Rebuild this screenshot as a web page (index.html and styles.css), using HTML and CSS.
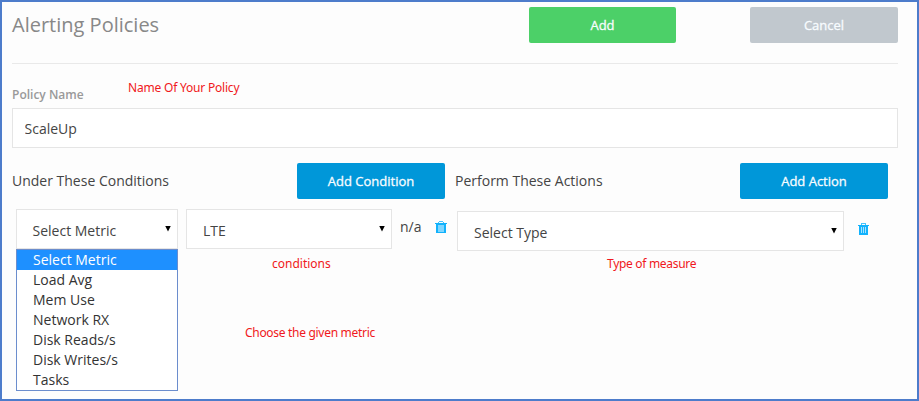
FILE: index.html
```html
<!DOCTYPE html>
<html lang="en">
<head>
<meta charset="utf-8">
<title>Alerting Policies</title>
<link rel="stylesheet" href="styles.css">
</head>
<body>
<main class="frame">
  <header class="header">
    <h1 class="title">Alerting Policies</h1>
    <button class="btn btn-add">Add</button>
    <button class="btn btn-cancel">Cancel</button>
  </header>
  <label class="label" for="name">Policy Name</label>
  <input class="name" id="name" type="text" value="ScaleUp">
  <div class="columns">
    <section class="conditions">
      <div class="section-head"><h2>Under These Conditions</h2><button class="btn btn-blue">Add Condition</button></div>
      <div class="row">
        <div class="select metric">
          <span>Select Metric</span><i class="arrow"></i>
          <ul class="menu">
            <li class="selected">Select Metric</li>
            <li>Load Avg</li>
            <li>Mem Use</li>
            <li>Network RX</li>
            <li>Disk Reads/s</li>
            <li>Disk Writes/s</li>
            <li>Tasks</li>
          </ul>
        </div>
        <div class="select operator"><span>LTE</span><i class="arrow"></i></div>
        <span class="unit">n/a</span>
        <svg class="trash" viewBox="0 0 12 13" shape-rendering="crispEdges"><path fill="#7fd6ff" d="M3 4h6v7H3z"/><path fill="#12b2fc" d="M0 2h12v1H0zM1 3h10v1H1zM1 4h2v8H1zM9 4h2v8H9zM2 11h8v1H2z"/><path fill="#45c3fd" d="M4 0h4v1H4zM3 1h1v1H3zM8 1h1v1H8z"/></svg>
      </div>
    </section>
    <section class="actions">
      <div class="section-head"><h2>Perform These Actions</h2><button class="btn btn-blue">Add Action</button></div>
      <div class="row action-row">
        <div class="select type"><span>Select Type</span><i class="arrow"></i></div>
        <svg class="trash" viewBox="0 0 12 13" shape-rendering="crispEdges"><path fill="#12b2fc" d="M0 2h11v1H0zM1 3h9v9H1z"/><path fill="#45c3fd" d="M3 0h5v1H3zM3 1h1v1H3zM7 1h1v1H7z"/><path fill="#a5e2ff" d="M3 4h1v6H3zM5 4h1v6H5zM7 4h1v6H7z"/></svg>
      </div>
    </section>
  </div>
  <span class="note note-name">Name Of Your Policy</span>
  <span class="note note-conditions">conditions</span>
  <span class="note note-type">Type of measure</span>
  <span class="note note-metric">Choose the given metric</span>
</main>
</body>
</html>
```
FILE: styles.css
```css
* { box-sizing: border-box; }
body { margin: 0; font: 14px/20px "Open Sans", sans-serif; color: #444; }
.frame { position: relative; width: 919px; height: 401px; padding: 5px 19px 0 10px; border: 2px solid #4d7ccb; background: #fdfdfd; overflow: hidden; }
.header { display: flex; height: 57px; border-bottom: 1px solid #e9e9e9; }
.title { flex: 1; margin: 3px 0 0; font-size: 20px; line-height: 30px; font-weight: 400; color: #888; }
.btn { width: 148px; height: 36px; padding: 0; border: 0; border-radius: 2px; font: 400 13px/36px "Open Sans", sans-serif; -webkit-text-stroke: 0.3px; color: #f8fcff; }
.btn-add { width: 147px; margin-right: 74px; background: #4cd068; }
.btn-cancel { background: #c1c8ce; }
.btn-blue { background: #0097d9; }
.label { display: block; height: 44px; padding-top: 21px; font-size: 12px; font-weight: 600; color: #999; }
.name { display: block; width: 886px; height: 40px; padding: 0 12px 0 11.5px; border: 1px solid #e5e5e5; border-radius: 0; background: #fff; font: inherit; color: #444; }
.columns { display: flex; gap: 10px; margin-top: 15px; }
.conditions, .actions { width: 433px; }
.section-head { display: flex; justify-content: space-between; align-items: center; height: 36px; }
.section-head h2 { margin: 0; font-size: 14px; font-weight: 400; }
.row { display: flex; margin-top: 10px; padding-left: 4px; }
.row > * { flex-shrink: 0; }
.action-row { margin-top: 12px; padding-left: 2px; }
.select { position: relative; display: flex; justify-content: space-between; height: 40px; padding: 4px 6px 0 16px; align-items: center; border: 1px solid #e5e5e5; background: #fff; }
.arrow { width: 6px; height: 6px; margin-top: -5px; background: #000; clip-path: polygon(0 0, 100% 0, 50% 100%); }
.metric { width: 162px; margin-right: 8px; padding-left: 15.5px; }
.operator { width: 206px; margin-right: 8px; }
.type { width: 387px; }
.unit { width: 35px; padding-top: 8px; }
.trash { width: 12px; height: 13px; margin-top: 12px; }
.action-row .trash { margin-left: 14px; }
.menu { position: absolute; top: 39px; left: -1px; width: 162px; height: 142px; margin: 0; padding: 0; border: 1px solid #6b8dcd; background: #fff; list-style: none; color: #333; }
.menu li { height: 20px; padding-left: 16px; }
.menu .selected { background: #1e90ff; color: #fff; }
.note { position: absolute; font: 12px/16px "Noto Sans", sans-serif; letter-spacing: -0.2px; color: #f01820; white-space: nowrap; }
.note-name { left: 126px; top: 78px; }
.note-conditions { left: 270px; top: 254px; letter-spacing: 0; }
.note-type { left: 605px; top: 254px; letter-spacing: -0.3px; }
.note-metric { left: 243px; top: 323px; letter-spacing: -0.3px; }
```
